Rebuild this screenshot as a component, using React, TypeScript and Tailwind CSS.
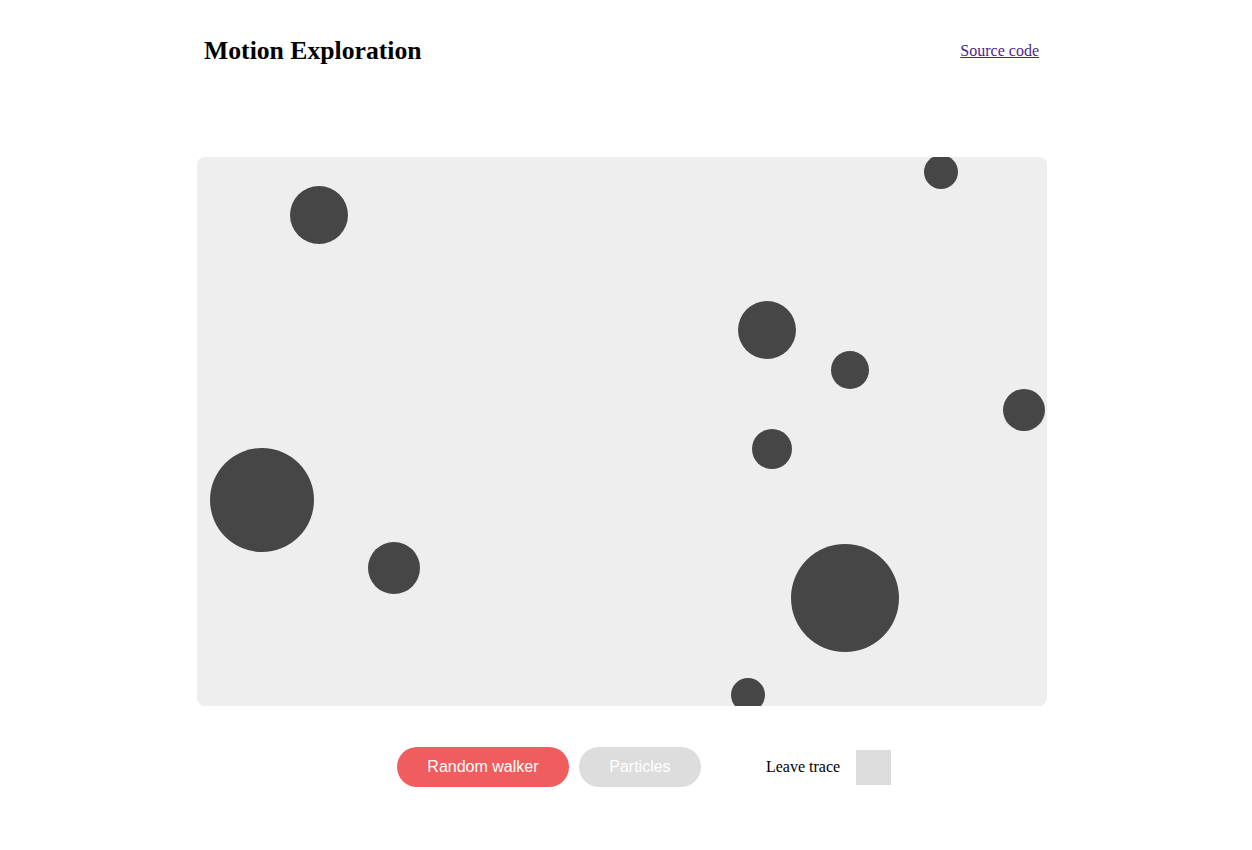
import React from 'react';

const balls = [
  { x: 122, y: 58, r: 29 },
  { x: 744, y: 15, r: 17 },
  { x: 570, y: 173, r: 29 },
  { x: 653, y: 213, r: 19 },
  { x: 827, y: 253, r: 21 },
  { x: 575, y: 292, r: 20 },
  { x: 65, y: 343, r: 52 },
  { x: 197, y: 411, r: 26 },
  { x: 648, y: 441, r: 54 },
  { x: 551, y: 538, r: 17 },
];

export default function App() {
  return (
    <div className="min-h-[850px] bg-white text-black font-['Liberation_Serif','Times_New_Roman',serif]">
      <div className="ml-[197px] w-[850px] pt-[37px]">
        {/* Header */}
        <div className="flex items-center justify-between px-[7px] h-[28px]">
          <h2 className="text-[25.7px] font-bold leading-none">Motion Exploration</h2>
          <a href="#" className="text-[16px] text-[#4b1e8c] underline mr-[1px]">
            Source code
          </a>
        </div>

        {/* Canvas */}
        <div className="relative mt-[92px] h-[549px] overflow-hidden rounded-[8px] bg-[#eeeeee]">
          {balls.map((b, i) => (
            <div
              key={i}
              className="absolute rounded-full bg-[#464646]"
              style={{ left: b.x - b.r, top: b.y - b.r, width: b.r * 2, height: b.r * 2 }}
            />
          ))}
        </div>

        {/* Controls */}
        <div className="mt-[41px] flex items-center justify-center pl-[44px]">
          <button className="h-[40px] w-[172px] rounded-full bg-[#f05d5e] text-white text-[16px] font-['Liberation_Sans',Arial,sans-serif]">
            Random walker
          </button>
          <button className="ml-[10px] h-[40px] w-[122px] rounded-full bg-[#dddddd] text-white text-[16px] font-['Liberation_Sans',Arial,sans-serif]">
            Particles
          </button>
          <span className="ml-[65px] text-[16px]">Leave trace</span>
          <div className="ml-[16px] h-[35px] w-[35px] bg-[#dcdcdc]" />
        </div>
      </div>
    </div>
  );
}
